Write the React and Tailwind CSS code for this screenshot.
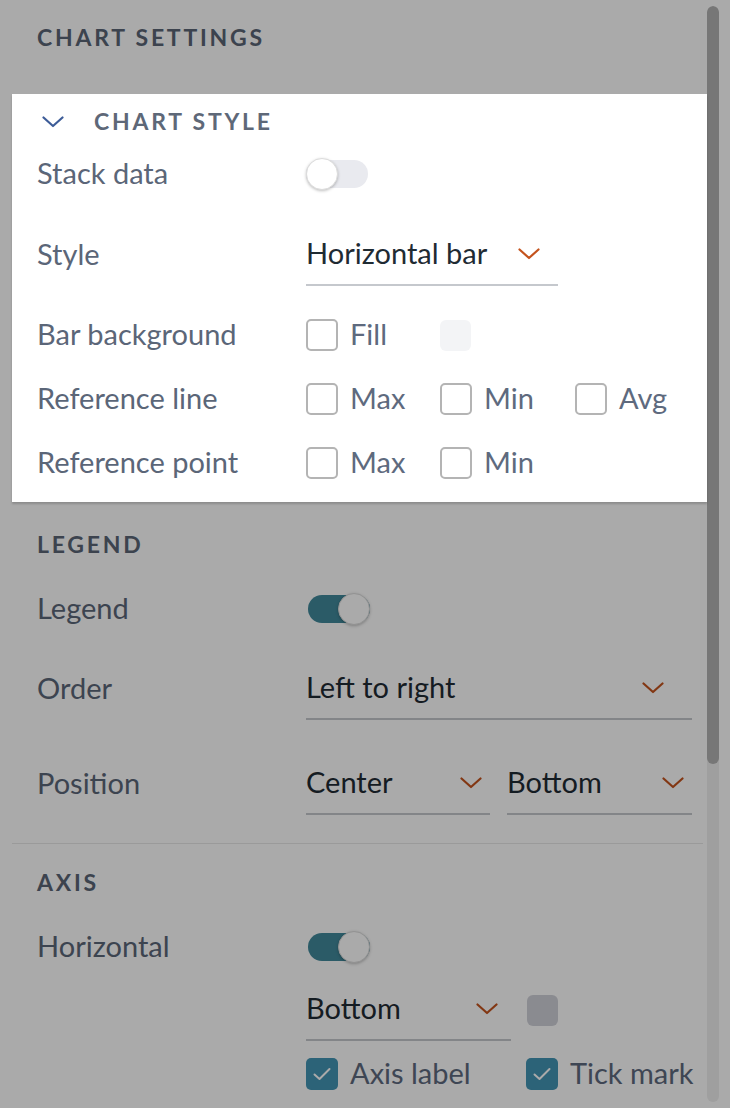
import React from "react";

function Chevron({ color = "#c4531d", w = 22 }) {
  return (
    <svg width={w} height="12" viewBox="0 0 22 12" fill="none" className="shrink-0">
      <polyline points="1.5,1.5 11,10 20.5,1.5" stroke={color} strokeWidth="2.2" strokeLinecap="round" strokeLinejoin="round" />
    </svg>
  );
}

function Toggle({ on }) {
  return (
    <div className={on ? "relative ml-[2px] w-[62px] h-[28px] rounded-full bg-[#41899b]" : "relative w-[62px] h-[28px] rounded-full bg-[#e9eaef]"}>
      <div className={on ? "absolute top-[-2px] right-0 w-8 h-8 rounded-full bg-white border border-[#dcdcdc] shadow-[0_1px_3px_rgba(0,0,0,0.25)]" : "absolute top-[-2px] left-0 w-8 h-8 rounded-full bg-white border border-[#dcdcdc] shadow-[0_1px_3px_rgba(0,0,0,0.25)]"} />
    </div>
  );
}

function Checkbox({ checked }) {
  if (checked) {
    return (
      <div className="w-[32px] h-[32px] rounded-[5px] bg-[#4395b4] flex items-center justify-center shrink-0">
        <svg width="20" height="16" viewBox="0 0 20 16" fill="none">
          <polyline points="2.5,8.5 7.5,13 17.5,3" stroke="#ffffff" strokeWidth="2" strokeLinecap="round" strokeLinejoin="round" />
        </svg>
      </div>
    );
  }
  return <div className="w-[32px] h-[32px] rounded-[5px] border-2 border-[#b4b4b4] bg-white shrink-0" />;
}

function CheckItem({ label, checked, className }) {
  return (
    <div className={"flex items-center gap-3 " + className}>
      <Checkbox checked={checked} />
      <span className="pb-[4px] text-[29px] text-[#5e6a7e] leading-none whitespace-nowrap">{label}</span>
    </div>
  );
}

function Select({ value, className }) {
  return (
    <div className={"h-[62px] flex items-center justify-between border-b-2 border-[#c5c8cd] " + className}>
      <span className="pb-[4px] text-[29px] text-[#1f2b33] leading-none whitespace-nowrap">{value}</span>
      <Chevron />
    </div>
  );
}

function Label({ children }) {
  return <div className="w-[269px] shrink-0 pb-[4px] text-[29px] text-[#5b6678] leading-none whitespace-nowrap">{children}</div>;
}

function Heading({ children, className }) {
  return (
    <div className={"flex items-center h-[40px] pb-[1px] text-[23px] font-bold tracking-[0.12em] text-[#5a6576] whitespace-nowrap " + className}>
      {children}
    </div>
  );
}

export default function App() {
  return (
    <div className="relative w-[730px] h-[1108px] overflow-hidden bg-white flex font-['Lato','Noto_Sans',sans-serif]">
      <div className="w-[707px] shrink-0 flex flex-col">
        {/* Top heading */}
        <div className="pl-[37px] pt-[18px] h-[94px]">
          <Heading>CHART SETTINGS</Heading>
        </div>

        {/* Highlighted card */}
        <div className="relative z-10 ml-[12px] bg-white pl-[25px] pr-[15px] pb-[7px] shadow-[0_2px_2px_rgba(0,0,0,0.18)]">
          <div className="h-[56px] flex items-center">
            <div className="ml-[5px]">
              <Chevron color="#3d5c98" />
            </div>
            <span className="ml-[30px] pb-[1px] text-[23px] font-bold tracking-[0.12em] text-[#5e6878]">CHART STYLE</span>
          </div>
          <div className="h-[48px] flex items-center">
            <Label>Stack data</Label>
            <Toggle on={false} />
          </div>
          <div className="mt-[26px] flex items-center">
            <Label>Style</Label>
            <Select value="Horizontal bar" className="w-[252px] pr-[18px] gap-[27px]" />
          </div>
          <div className="mt-[17px] h-16 flex items-center">
            <Label>Bar background</Label>
            <CheckItem label="Fill" className="w-[134px]" />
            <div className="w-[31px] h-[31px] rounded-[6px] bg-[#f3f4f6]" />
          </div>
          <div className="h-16 flex items-center">
            <Label>Reference line</Label>
            <CheckItem label="Max" className="w-[134px]" />
            <CheckItem label="Min" className="w-[135px]" />
            <CheckItem label="Avg" />
          </div>
          <div className="h-16 flex items-center">
            <Label>Reference point</Label>
            <CheckItem label="Max" className="w-[134px]" />
            <CheckItem label="Min" />
          </div>
        </div>

        {/* Legend section */}
        <div className="pl-[37px] pr-[15px]">
          <Heading className="mt-[23px]">LEGEND</Heading>
          <div className="mt-[20px] h-[48px] flex items-center">
            <Label>Legend</Label>
            <Toggle on={true} />
          </div>
          <div className="mt-[25px] flex items-center">
            <Label>Order</Label>
            <Select value="Left to right" className="w-[386px] pr-[28px]" />
          </div>
          <div className="mt-[33px] flex items-center">
            <Label>Position</Label>
            <Select value="Center" className="w-[184px] pr-[8px]" />
            <Select value="Bottom" className="ml-[17px] w-[185px] pr-[8px]" />
          </div>
        </div>

        <div className="mt-[28px] ml-[12px] w-[691px] h-px bg-[#e8e8e8]" />

        {/* Axis section */}
        <div className="pl-[37px] pr-[15px]">
          <Heading className="mt-[19px]">AXIS</Heading>
          <div className="mt-[20px] h-[48px] flex items-center">
            <Label>Horizontal</Label>
            <Toggle on={true} />
          </div>
          <div className="mt-[8px] ml-[269px] flex items-center">
            <Select value="Bottom" className="w-[205px] pr-[13px]" />
            <div className="ml-[16px] w-[31px] h-[31px] rounded-[6px] bg-[#d0d1d8]" />
          </div>
          <div className="mt-[17px] ml-[269px] h-[32px] flex items-center">
            <CheckItem label="Axis label" checked className="w-[220px] shrink-0" />
            <CheckItem label="Tick mark" checked className="shrink-0" />
          </div>
        </div>
      </div>

      {/* Scrollbar */}
      <div className="w-[23px] shrink-0 pt-[6px] pb-[6px]">
        <div className="w-3 h-full rounded-full bg-[#efefef] overflow-hidden">
          <div className="h-[758px] rounded-full bg-[#b3b3b3]" />
        </div>
      </div>

      {/* Dim overlay */}
      <div className="absolute inset-0 z-[5] bg-[rgba(0,0,0,0.333)]" />
    </div>
  );
}
